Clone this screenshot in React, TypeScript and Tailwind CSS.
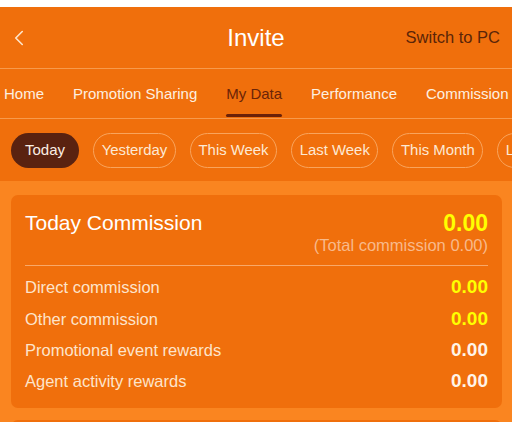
import { ChevronLeft } from "lucide-react";

const tabs = ["Home", "Promotion Sharing", "My Data", "Performance", "Commission"];
const ranges = ["Today", "Yesterday", "This Week", "Last Week", "This Month", "Last Month"];

const rows = [
  { label: "Direct commission", value: "0.00", highlight: true },
  { label: "Other commission", value: "0.00", highlight: true },
  { label: "Promotional event rewards", value: "0.00", highlight: false },
  { label: "Agent activity rewards", value: "0.00", highlight: false },
];

export default function App() {
  return (
    <div
      className="h-[422px] w-[512px] overflow-hidden bg-white pt-[7px]"
      style={{ fontFamily: '"Liberation Sans", Arial, sans-serif' }}
    >
      {/* top bar */}
      <header className="relative flex h-[62px] items-center bg-[#f06f0c] border-b border-[#f79a4c]">
        <ChevronLeft className="ml-[6px] h-[26px] w-[26px] text-[#fde6cc]" strokeWidth={1.5} />
        <h1 className="absolute left-1/2 -translate-x-1/2 text-[24px] text-white">Invite</h1>
        <span className="ml-auto mr-[12px] text-[16.5px] text-[#5a2508]">Switch to PC</span>
      </header>

      {/* section tabs */}
      <nav className="flex h-[50px] gap-[29px] whitespace-nowrap bg-[#f06f0c] pl-[4px] border-b border-[#f79a4c]">
        {tabs.map((tab) => {
          const active = tab === "My Data";
          return (
            <div key={tab} className="relative flex items-center pt-[2px] text-[15px]">
              <span className={active ? "text-[#6b2408]" : "text-[#fdf0e0]"}>{tab}</span>
              {active && (
                <span className="absolute bottom-[1px] left-0 right-0 h-[3px] rounded-full bg-[#6b2108]" />
              )}
            </div>
          );
        })}
      </nav>

      {/* date range chips */}
      <div className="flex h-[62px] items-center gap-[14px] overflow-hidden whitespace-nowrap bg-[#f06f0c] pl-[11px]">
        {ranges.map((r) => (
          <span
            key={r}
            className={
              r === "Today"
                ? "flex h-[35px] shrink-0 items-center rounded-full bg-[#5a2210] px-[14px] text-[15px] text-[#fbeee2]"
                : "flex h-[35px] shrink-0 items-center rounded-full border border-[#f9a45c] px-[7.6px] text-[14.9px] text-[#fde9d4]"
            }
          >
            {r}
          </span>
        ))}
      </div>

      {/* commission summary */}
      <main className="bg-[#fa8520] pl-[11px] pr-[10px] pt-[14px]">
        <section className="rounded-[7px] bg-[#f06f0c] px-[14px] pb-[11px] pt-[15px]">
          <div className="flex items-center justify-between">
            <span className="text-[21px] leading-[26px] text-white">Today Commission</span>
            <span className="text-[23px] font-bold leading-[26px] text-[#ffff00]">0.00</span>
          </div>
          <div className="text-right text-[16.5px] leading-[19px] text-[#f8b98a]">
            (Total commission 0.00)
          </div>
          <div className="mt-[10px] h-px bg-[#f8a869]" />
          <div className="pt-[6px]">
            {rows.map((row) => (
              <div key={row.label} className="flex h-[31.3px] items-center justify-between">
                <span className="text-[16.5px] text-[#fde4cb]">{row.label}</span>
                <span
                  className={
                    row.highlight
                      ? "text-[19px] font-bold text-[#ffff00]"
                      : "text-[19px] font-bold text-[#fff4e8]"
                  }
                >
                  {row.value}
                </span>
              </div>
            ))}
          </div>
        </section>
        <div className="mt-[12px] h-[20px] rounded-t-[7px] bg-[#f06f0c]" />
      </main>
    </div>
  );
}
